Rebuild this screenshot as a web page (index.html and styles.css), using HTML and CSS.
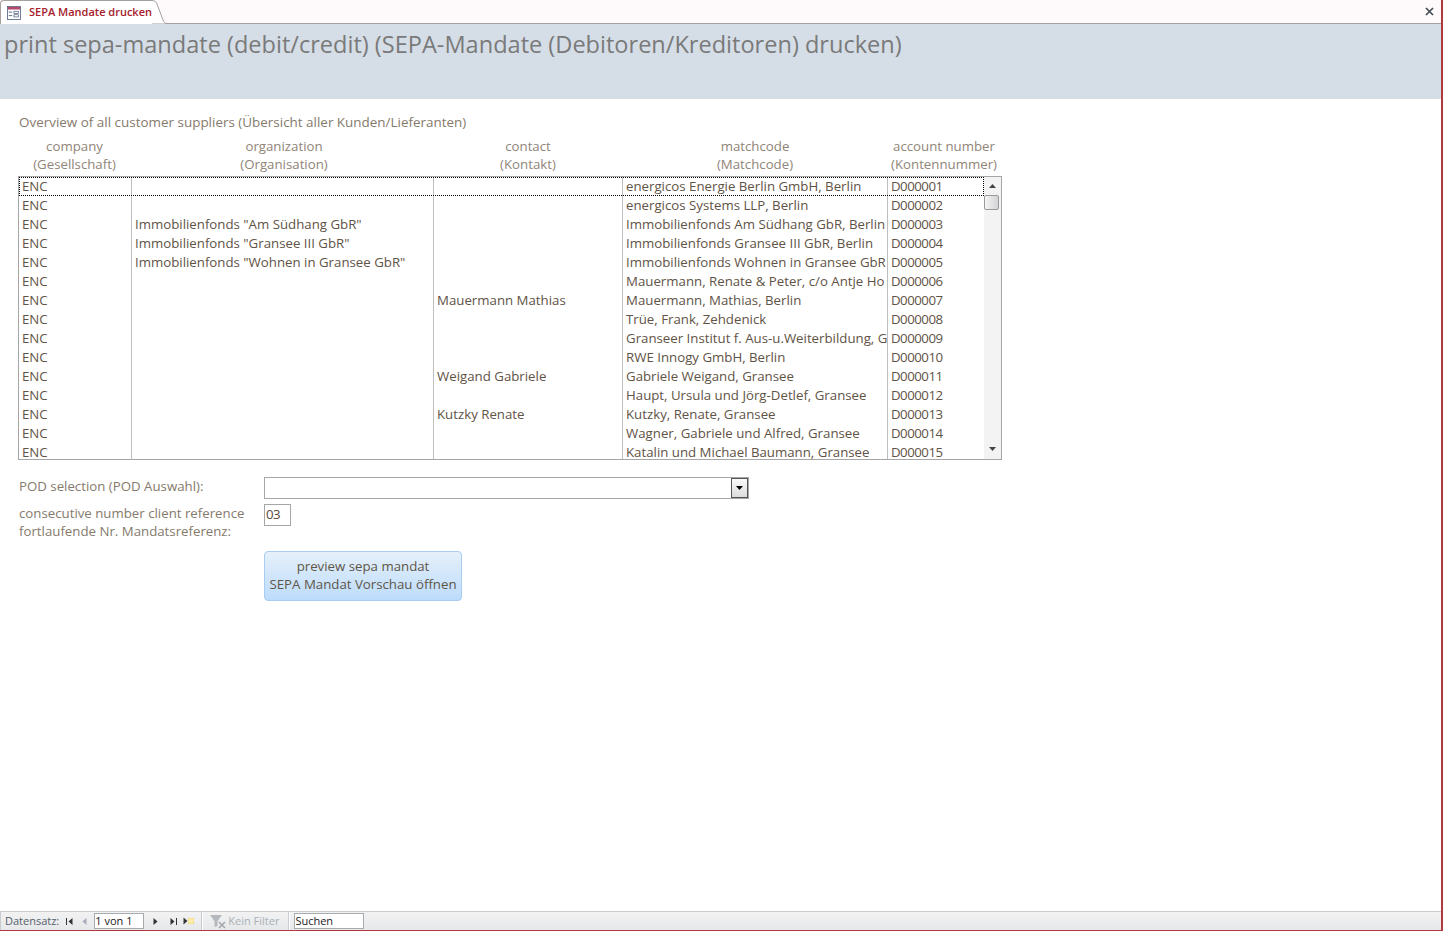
FILE: index.html
```html
<!DOCTYPE html>
<html>
<head>
<meta charset="utf-8">
<title>SEPA Mandate drucken</title>
<link rel="stylesheet" href="styles.css">
</head>
<body>
<div class="window">
  <div class="tabbar">
    <div class="tab">
      <svg class="tab-icon" width="16" height="16" viewBox="0 0 16 16">
        <rect x="0.5" y="0.5" width="15" height="15" fill="#fff" stroke="#5a6a8a"/>
        <rect x="1" y="1" width="14" height="3" fill="#b5486a"/>
        <path d="M2 7h4M2 11h4" stroke="#4a5a7a"/>
        <rect x="8" y="6" width="5" height="2.5" fill="#fff" stroke="#4a5a7a" stroke-width="0.8"/>
        <rect x="8" y="10" width="5" height="2.5" fill="#fff" stroke="#4a5a7a" stroke-width="0.8"/>
      </svg>
      <span class="tab-title">SEPA Mandate drucken</span>
    </div>
    <svg class="tab-curve" width="14" height="24" viewBox="0 0 14 24">
      <path d="M0 0.5C3 0.5 4 2 5 4L11 20C12 22 12.500 23 14 23.500L0 23.500Z" fill="#fff"/>
      <path d="M0 0.500C3 0.500 4 2 5 4L11 20C12 22 12.500 23 14 23.500" fill="none" stroke="#a5a09c"/>
    </svg>
    <div class="close">
      <svg width="9" height="9" viewBox="0 0 9 9"><path d="M1 1l7 7M8 1l-7 7" stroke="#444c55" stroke-width="1.700"/></svg>
    </div>
  </div>

  <div class="header">print sepa-mandate (debit/credit) (SEPA-Mandate (Debitoren/Kreditoren) drucken)</div>

  <div class="content">
    <div class="overview">Overview of all customer suppliers (Übersicht aller Kunden/Lieferanten)</div>

    <div class="cols head">
      <div>company<br>(Gesellschaft)</div>
      <div class="h-org">organization<br>(Organisation)</div>
      <div class="h-shift">contact<br>(Kontakt)</div>
      <div class="h-shift">matchcode<br>(Matchcode)</div>
      <div class="h-acct">account number<br>(Kontennummer)</div>
    </div>

    <div class="list">
      <div class="rows">
        <div class="cols row selected"><div>ENC</div><div></div><div></div><div>energicos Energie Berlin GmbH, Berlin</div><div>D000001</div></div>
        <div class="cols row"><div>ENC</div><div></div><div></div><div>energicos Systems LLP, Berlin</div><div>D000002</div></div>
        <div class="cols row"><div>ENC</div><div>Immobilienfonds "Am Südhang GbR"</div><div></div><div>Immobilienfonds Am Südhang GbR, Berlin</div><div>D000003</div></div>
        <div class="cols row"><div>ENC</div><div>Immobilienfonds "Gransee III GbR"</div><div></div><div>Immobilienfonds Gransee III GbR, Berlin</div><div>D000004</div></div>
        <div class="cols row"><div>ENC</div><div>Immobilienfonds "Wohnen in Gransee GbR"</div><div></div><div>Immobilienfonds Wohnen in Gransee GbR</div><div>D000005</div></div>
        <div class="cols row"><div>ENC</div><div></div><div></div><div>Mauermann, Renate &amp; Peter, c/o Antje Ho</div><div>D000006</div></div>
        <div class="cols row"><div>ENC</div><div></div><div>Mauermann Mathias</div><div>Mauermann, Mathias, Berlin</div><div>D000007</div></div>
        <div class="cols row"><div>ENC</div><div></div><div></div><div>Trüe, Frank, Zehdenick</div><div>D000008</div></div>
        <div class="cols row"><div>ENC</div><div></div><div></div><div>Granseer Institut f. Aus-u.Weiterbildung, G</div><div>D000009</div></div>
        <div class="cols row"><div>ENC</div><div></div><div></div><div>RWE Innogy GmbH, Berlin</div><div>D000010</div></div>
        <div class="cols row"><div>ENC</div><div></div><div>Weigand Gabriele</div><div>Gabriele Weigand, Gransee</div><div>D000011</div></div>
        <div class="cols row"><div>ENC</div><div></div><div></div><div>Haupt, Ursula und Jörg-Detlef, Gransee</div><div>D000012</div></div>
        <div class="cols row"><div>ENC</div><div></div><div>Kutzky Renate</div><div>Kutzky, Renate, Gransee</div><div>D000013</div></div>
        <div class="cols row"><div>ENC</div><div></div><div></div><div>Wagner, Gabriele und Alfred, Gransee</div><div>D000014</div></div>
        <div class="cols row"><div>ENC</div><div></div><div></div><div>Katalin und Michael Baumann, Gransee</div><div>D000015</div></div>
      </div>
      <div class="scrollbar">
        <svg class="arrow" width="7" height="4" viewBox="0 0 7 4"><path d="M3.500 0L7 4H0Z" fill="#444"/></svg>
        <div class="thumb"></div>
        <svg class="arrow down" width="7" height="4" viewBox="0 0 7 4"><path d="M0 0H7L3.500 4Z" fill="#444"/></svg>
      </div>
    </div>

    <div class="form">
      <div class="label">POD selection (POD Auswahl):</div>
      <div class="combo">
        <div class="combo-btn"><svg width="7" height="4" viewBox="0 0 7 4"><path d="M0 0H7L3.500 4Z" fill="#000"/></svg></div>
      </div>
      <div class="label consec">consecutive number client reference<br>fortlaufende Nr. Mandatsreferenz:</div>
      <div class="numbox">03</div>
      <div class="btn">preview sepa mandat<br>SEPA Mandat Vorschau öffnen</div>
    </div>
  </div>

  <div class="statusbar">
    <span class="st-label">Datensatz:</span>
    <svg class="nav first" width="7" height="7" viewBox="0 0 7 7"><path d="M0 0h1v7H0zM6.500 0v7L2.500 3.500Z" fill="#333"/></svg>
    <svg class="nav prev" width="5" height="7" viewBox="0 0 5 7"><path d="M4.500 0v7L0.500 3.500Z" fill="#aab"/></svg>
    <div class="st-input recnum">1 von 1</div>
    <svg class="nav next" width="5" height="7" viewBox="0 0 5 7"><path d="M0.500 0v7L4.500 3.500Z" fill="#333"/></svg>
    <svg class="nav last" width="7" height="7" viewBox="0 0 7 7"><path d="M6 0h1v7H6zM0.500 0v7L4.500 3.500Z" fill="#333"/></svg>
    <svg class="nav new" width="12" height="8" viewBox="0 0 12 8"><path d="M0.500 0.500v7L4.500 4Z" fill="#333"/><path d="M5 1h6v6H5z" fill="#f0d060"/><path d="M5 3h6M5 5h6M7 1v6M9 1v6" stroke="#fff6c8"/></svg>
    <span class="sep"></span>
    <svg class="funnel" width="18" height="15" viewBox="0 0 18 15"><path d="M0 1h12L7.500 7v5l-3 1V7Z" fill="#b4b8bc"/><path d="M9 8l6 6M15 8l-6 6" stroke="#a4a8ac" stroke-width="1.600"/></svg>
    <span class="nofilter">Kein Filter</span>
    <span class="sep"></span>
    <div class="st-input search">Suchen</div>
  </div>
</div>
</body>
</html>
```
FILE: styles.css
```css
html, body {
  margin: 0;
  padding: 0;
  height: 100%;
}
body {
  background: #fff;
  font-family: "Open Sans", "Noto Sans", sans-serif;
  font-size: 13.25px;
  color: #7b6b58;
  overflow: hidden;
}
.window {
  height: 931px;
  box-sizing: border-box;
  border-right: 2px solid #b0393e;
  border-bottom: 1px solid #b0393e;
  display: flex;
  flex-direction: column;
}

/* tab strip */
.tabbar {
  height: 24px;
  flex: none;
  display: flex;
  background: #fef9fb;
  box-sizing: border-box;
  border-bottom: 1px solid #a5a09c;
}
.tab {
  height: 24px;
  box-sizing: border-box;
  background: #fff;
  border-top: 1px solid #a5a09c;
  border-left: 1px solid #a5a09c;
  border-top-left-radius: 4px;
  padding-left: 6px;
  display: flex;
  align-items: center;
  gap: 7px;
  font-size: 11px;
  font-weight: 600;
  color: #a5202c;
  width: 152px;
  white-space: nowrap;
}
.tab-title {
  margin-left: 1px;
  margin-bottom: 2px;
}
.tab-curve {
  flex: none;
}
.close {
  margin-left: auto;
  margin-right: 7px;
  display: flex;
  align-items: center;
}

.header {
  height: 75px;
  flex: none;
  box-sizing: border-box;
  background: #d5dee7;
  padding: 3px 0 0 4px;
  font-size: 23.55px;
  line-height: 35px;
  color: #7a7a7a;
  white-space: nowrap;
}

.content {
  flex: 1;
  padding: 14px 0 0 18px;
}
.overview {
  font-size: 13.45px;
  line-height: 18px;
  padding-left: 1px;
  color: #857a6c;
}

/* the list and its heading share the column widths */
.cols {
  display: grid;
  grid-template-columns: 113px 302px 189px 265px 96px;
}
.head {
  margin-top: 6px;
  height: 36px;
  line-height: 18px;
  text-align: center;
  color: #8f8578;
  white-space: nowrap;
}
.h-org {
  margin-left: 2px;
  margin-right: -2px;
}
.h-shift {
  padding-left: 1px;
}
.h-acct {
  margin-right: -18px;
}

.list {
  width: 984px;
  height: 284px;
  margin-top: 3px;
  box-sizing: border-box;
  border: 1px solid #a6a6a6;
  display: flex;
  overflow: hidden;
}
.rows {
  width: 965px;
  flex: none;
  overflow: hidden;
}
.row {
  height: 19px;
  line-height: 19px;
  color: #5f5346;
  box-sizing: border-box;
}
.row > div {
  box-sizing: border-box;
  padding-left: 3px;
  white-space: nowrap;
  overflow: hidden;
  border-right: 1px solid #bfbfbf;
}
.row > div:last-child {
  border-right: none;
  letter-spacing: -0.5px;
}
.selected {
  outline: 1px dotted #000;
  outline-offset: -1px;
}

.scrollbar {
  width: 17px;
  flex: none;
  background: #f3f3f3;
  box-sizing: border-box;
  display: flex;
  flex-direction: column;
  padding-top: 7px;
}
.arrow {
  margin-left: 5px;
}
.thumb {
  width: 15px;
  height: 15px;
  margin-top: 7px;
  box-sizing: border-box;
  border: 1px solid #9a9a9a;
  border-radius: 2px;
  background: linear-gradient(90deg, #f4f4f4, #d4d4d8);
}
.scrollbar .down {
  margin-top: auto;
  margin-bottom: 8px;
}

/* lower form */
.form {
  margin-top: 17px;
  display: grid;
  grid-template-columns: 246px auto;
  justify-content: start;
}
.label {
  line-height: 18px;
  padding-left: 1px;
  color: #857a6c;
}
.combo {
  width: 485px;
  height: 22px;
  box-sizing: border-box;
  border: 1px solid #a6a6a6;
  display: flex;
  justify-content: flex-end;
}
.combo-btn {
  width: 17px;
  box-sizing: border-box;
  border: 1px solid #555;
  background: linear-gradient(#fafafa, #dcdcdc);
  display: flex;
  align-items: center;
  justify-content: center;
}
.consec {
  grid-row: 2 / span 2;
  margin-top: 5px;
}
.numbox {
  width: 27px;
  height: 22px;
  margin-top: 5px;
  box-sizing: border-box;
  border: 1px solid #a6a6a6;
  padding-left: 1px;
  line-height: 19px;
  color: #5a4a3a;
  letter-spacing: -0.5px;
}
.btn {
  grid-column: 2;
  width: 198px;
  height: 50px;
  margin-top: 25px;
  box-sizing: border-box;
  border: 1px solid #a9cdf0;
  border-radius: 4px;
  background: linear-gradient(#e6f0fa, #bcdcfb);
  text-align: center;
  line-height: 18px;
  padding-top: 5px;
  color: #5e5648;
  white-space: nowrap;
}

/* record navigation bar */
.statusbar {
  height: 19px;
  flex: none;
  box-sizing: border-box;
  border-top: 1px solid #c8ccd0;
  border-left: 1px solid #c8ccd0;
  background: linear-gradient(#f2f2f3, #e6e8ea);
  display: flex;
  align-items: center;
  font-size: 11px;
  color: #56616c;
}
.st-label {
  margin-left: 4px;
  margin-bottom: 2px;
}
.nav {
  flex: none;
}
.first { margin-left: 7px; }
.prev { margin-left: 9px; }
.st-input {
  height: 16px;
  box-sizing: border-box;
  background: #fff;
  border: 1px solid #a6abb0;
  color: #222;
  line-height: 14px;
}
.recnum {
  width: 50px;
  margin-left: 7px;
}
.next { margin-left: 9px; }
.last { margin-left: 12px; }
.new { margin-left: 6px; }
.sep {
  width: 1px;
  height: 18px;
  background: #c8ccd0;
  border-right: 1px solid #fff;
}
.statusbar .new + .sep { margin-left: 6px; }
.funnel { margin-left: 7px; }
.nofilter {
  color: #aab0b6;
  margin-bottom: 2px;
  margin-left: 0;
  margin-right: 9px;
}
.search {
  width: 70px;
  margin-left: 4px;
}
```
